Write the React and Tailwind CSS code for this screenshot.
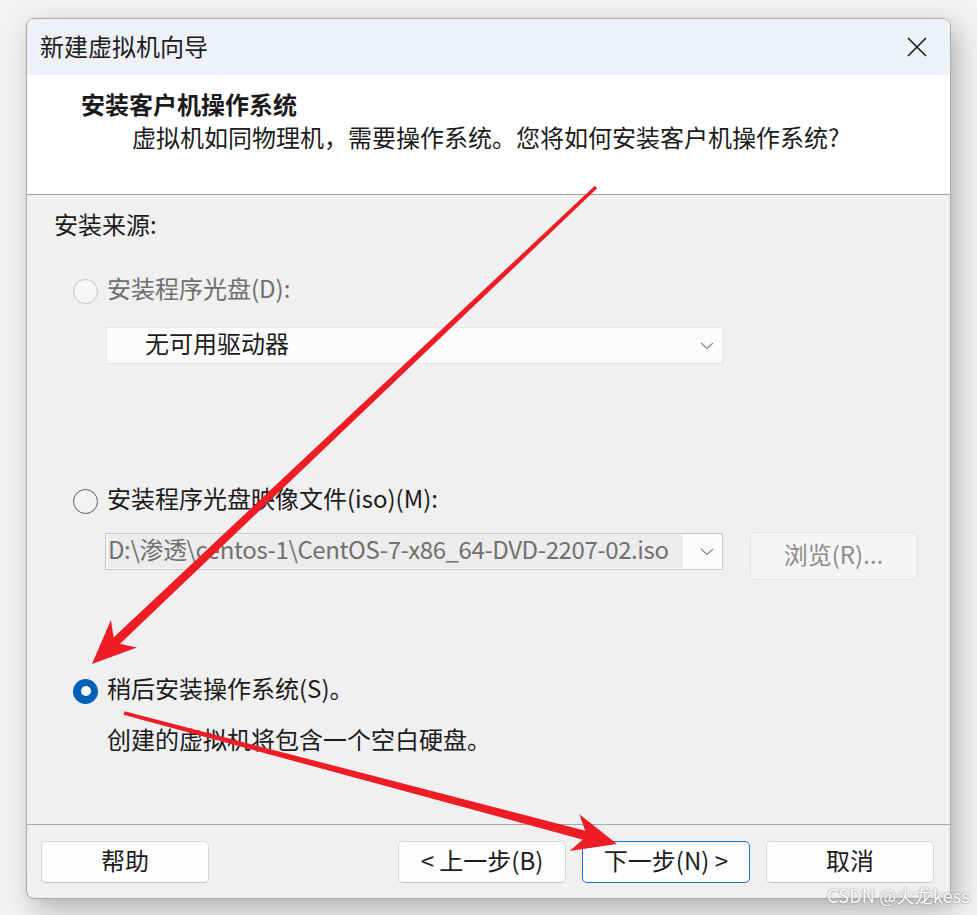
import React from "react";

function Radio({ state }) {
  // state: "disabled" | "off" | "on"
  if (state === "on") {
    return (
      <span className="w-[25px] h-[25px] rounded-full bg-[#005fb8] flex items-center justify-center shrink-0">
        <span className="w-[10px] h-[10px] rounded-full bg-white" />
      </span>
    );
  }
  return (
    <span
      className={
        state === "disabled"
          ? "w-[25px] h-[25px] rounded-full border-[1.5px] border-[#c4c4c4] bg-[#f6f6f6] shrink-0"
          : "w-[25px] h-[25px] rounded-full border-[1.5px] border-[#5d5d5d] bg-[#f3f3f3] shrink-0"
      }
    />
  );
}

function Chevron() {
  return (
    <svg width="14" height="8" viewBox="0 0 14 8" className="shrink-0">
      <path d="M1 1 L7 6.5 L13 1" fill="none" stroke="#8a8a8a" strokeWidth="1.2" />
    </svg>
  );
}

function Btn({ children, primary }) {
  return (
    <button
      type="button"
      className={
        "w-[168px] h-[42px] rounded-[5px] bg-[#fdfdfd] text-[24px] leading-[30px] pb-[4px] text-[#1b1b1b] flex items-center justify-center border " +
        (primary ? "border-[#1c6fc2]" : "border-[#d6d6d6] border-b-[#c2c2c2]")
      }
    >
      {children}
    </button>
  );
}

function Arrow({ x1, y1, x2, y2 }) {
  const dx = x2 - x1;
  const dy = y2 - y1;
  const len = Math.sqrt(dx * dx + dy * dy);
  const ux = dx / len;
  const uy = dy / len;
  const nx = -uy;
  const ny = ux;
  const L = 44;
  const H = 19;
  const notch = 31;
  const bx = x2 - L * ux;
  const by = y2 - L * uy;
  const cx = x2 - notch * ux;
  const cy = y2 - notch * uy;
  const w0 = 1.8;
  const w1 = 4.6;
  const shaft = [
    [x1 + w0 * nx, y1 + w0 * ny],
    [cx + w1 * nx, cy + w1 * ny],
    [cx - w1 * nx, cy - w1 * ny],
    [x1 - w0 * nx, y1 - w0 * ny],
  ];
  const head = [
    [x2, y2],
    [bx + H * nx, by + H * ny],
    [cx, cy],
    [bx - H * nx, by - H * ny],
  ];
  const pts = (a) => a.map((p) => p[0].toFixed(1) + "," + p[1].toFixed(1)).join(" ");
  return (
    <>
      <polygon points={pts(shaft)} fill="#ee1c25" />
      <polygon points={pts(head)} fill="#ee1c25" />
    </>
  );
}

export default function App() {
  return (
    <div className="relative w-[977px] h-[915px] overflow-hidden bg-[#f3f3f3] pl-[26px] pt-[18px] font-['Microsoft_YaHei_UI','Noto_Sans_CJK_SC','Noto_Sans',sans-serif] text-[#1b1b1b]">
      <div className="w-[925px] h-[881px] rounded-[8px] border border-[#a8a8a8] bg-[#f0f0f0] overflow-hidden flex flex-col shadow-[6px_10px_28px_rgba(0,0,0,0.28)]">
        {/* title bar */}
        <div className="h-[56px] bg-[#eef2f8] flex items-center justify-between pl-[13px] pr-[22px] shrink-0">
          <span className="text-[24px] leading-[30px] pb-[2px]">新建虚拟机向导</span>
          <svg width="22" height="22" viewBox="0 0 22 22">
            <path d="M2 2 L20 20 M20 2 L2 20" stroke="#1a1a1a" strokeWidth="1.6" />
          </svg>
        </div>

        {/* header */}
        <div className="h-[120px] bg-white border-b border-[#a0a0a0] pl-[54px] pt-[14px] shrink-0">
          <div className="text-[24px] leading-[30px] font-bold">安装客户机操作系统</div>
          <div className="text-[24px] leading-[30px] mt-[3px] pl-[51px]">
            虚拟机如同物理机，需要操作系统。您将如何安装客户机操作系统?
          </div>
        </div>

        {/* body */}
        <div className="flex-1 flex flex-col pl-[27px] border-b border-[#a8a8a8]">
          <div className="mt-[14px] h-[30px] text-[24px] leading-[30px]">安装来源:</div>

          <div className="mt-[37px] h-[30px] flex items-center gap-[9px] pl-[19px]">
            <Radio state="disabled" />
            <span className="text-[24px] leading-[30px] pb-[6px] text-[#6e6e6e]">安装程序光盘(D):</span>
          </div>

          <div className="mt-[21px] ml-[52px] w-[617px] h-[37px] bg-[#fbfbfb] border border-[#e6e6e6] flex items-center justify-between pl-[38px] pr-[8px]">
            <span className="text-[24px] leading-[30px] pb-[6px]">无可用驱动器</span>
            <Chevron />
          </div>

          <div className="mt-[122px] h-[30px] flex items-center gap-[9px] pl-[19px]">
            <Radio state="off" />
            <span className="text-[24px] leading-[30px] pb-[6px]">安装程序光盘映像文件(iso)(M):</span>
          </div>

          <div className="mt-[16px] ml-[51px] flex items-start gap-[27px]">
            <div className="mt-[1px] w-[618px] h-[37px] bg-[#fbfbfb] border border-[#c6c6c6] flex items-center justify-between pl-[2px] pr-[8px]">
              <span className="h-[33px] pr-[14px] bg-[#ececec] text-[24px] leading-[28px] tracking-[-0.4px] text-[#707070] whitespace-nowrap">
                D:\渗透\centos-1\CentOS-7-x86_64-DVD-2207-02.iso
              </span>
              <Chevron />
            </div>
            <button
              type="button"
              className="w-[167px] h-[48px] rounded-[5px] bg-[#f5f5f5] border border-[#e3e3e3] text-[24px] leading-[30px] pb-[4px] text-[#8c8c8c] flex items-center justify-center"
            >
              浏览(R)...
            </button>
          </div>

          <div className="mt-[96px] h-[30px] flex items-center gap-[9px] pl-[19px]">
            <Radio state="on" />
            <span className="text-[24px] leading-[30px] pb-[6px]">稍后安装操作系统(S)。</span>
          </div>

          <div className="mt-[18px] pl-[53px] h-[30px] text-[24px] leading-[30px]">
            创建的虚拟机将包含一个空白硬盘。
          </div>
        </div>

        {/* footer */}
        <div className="h-[73px] shrink-0 flex items-start pt-[16px] pl-[14px] pr-[16px]">
          <Btn>帮助</Btn>
          <div className="flex-1" />
          <div className="flex gap-[16px]">
            <Btn>&lt; 上一步(B)</Btn>
            <Btn primary>下一步(N) &gt;</Btn>
            <Btn>取消</Btn>
          </div>
        </div>
      </div>

      {/* annotation arrows */}
      <svg className="absolute left-0 top-0 pointer-events-none" width="977" height="915" viewBox="0 0 977 915">
        <Arrow x1={596} y1={187} x2={92} y2={664} />
        <Arrow x1={124} y1={713} x2={617} y2={844} />
      </svg>

      {/* watermark */}
      <div className="absolute left-[827px] top-[884px] text-[18px] leading-[22px] tracking-[0.2px] text-white font-['Noto_Sans_CJK_SC',sans-serif] [text-shadow:0_0_2px_rgba(90,90,90,0.9)]">
        CSDN @火龙kess
      </div>
    </div>
  );
}
